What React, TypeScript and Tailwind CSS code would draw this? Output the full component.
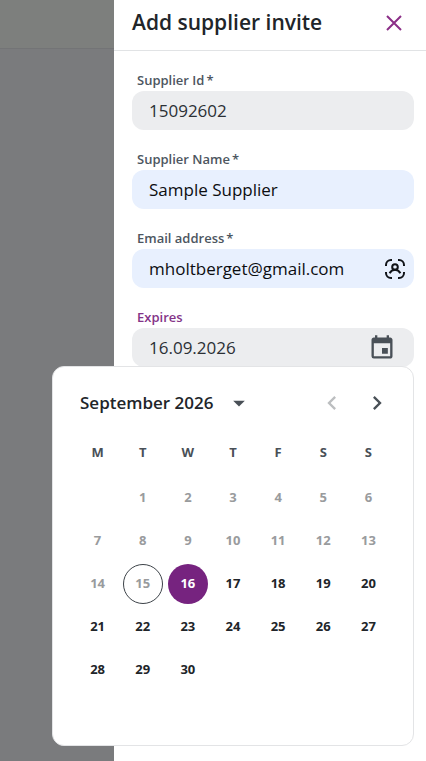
import { useState } from "react";
import { MdArrowDropDown, MdChevronLeft, MdChevronRight, MdEvent } from "react-icons/md";

const weekdays = ["M", "T", "W", "T", "F", "S", "S"];

const weeks: (number | null)[][] = [
  [null, 1, 2, 3, 4, 5, 6],
  [7, 8, 9, 10, 11, 12, 13],
  [14, 15, 16, 17, 18, 19, 20],
  [21, 22, 23, 24, 25, 26, 27],
  [28, 29, 30, null, null, null, null],
];

const today = 15;

const inputStyle = "block h-[39px] w-full rounded-xl pl-[17px] text-[17px] outline-none";

type FieldProps = {
  id: string;
  label: string;
  value: string;
  type?: string;
  filled?: boolean;
  children?: React.ReactNode;
};

const Field = ({ id, label, value, type = "text", filled, children }: FieldProps) => {
  return (
    <div>
      <label htmlFor={id} className="block h-[22px] pl-[5px] text-[13px] leading-[22px] font-semibold text-[#4d565f]">
        {label}
        <span className="ml-0.5">*</span>
      </label>
      <div className="relative">
        <input
          id={id}
          type={type}
          defaultValue={value}
          readOnly={!filled}
          className={`${inputStyle} ${filled ? "bg-[#e8f0fe] text-[#0c0d10]" : "bg-[#ecedef] text-[#2b3035]"}`}
        />
        {children}
      </div>
    </div>
  );
};

const ContactIcon = () => (
  <svg viewBox="0 0 20 20" className="size-5" fill="none" stroke="#101318" strokeWidth="2">
    <path d="M1 7V6a5 5 0 0 1 5-5h1M13 1h1a5 5 0 0 1 5 5v1M19 13v1a5 5 0 0 1-5 5h-1M7 19H6a5 5 0 0 1-5-5v-1" />
    <circle cx="10" cy="8" r="2.8" />
    <path d="M4.6 14.2c1.2-2.1 3-3.4 5.4-3.4s4.2 1.3 5.4 3.4" />
  </svg>
);

const Calendar = ({ selected, onSelect }: { selected: number; onSelect: (day: number) => void }) => {
  const dayStyle = (day: number) => {
    if (day === selected) return "bg-[#76237f] text-white";
    if (day === today) return "border border-[#3c4248] text-[#999b9d]";
    if (day < today) return "text-[#999b9d]";
    return "text-[#212529]";
  };

  return (
    <div className="absolute top-[38px] right-0 h-[380px] w-[362px] rounded-xl border border-[#e3e4e6] bg-white px-[22px] pt-2.5">
      <div className="mb-0.5 flex h-[51px] items-center justify-between">
        <button type="button" className="flex items-center gap-3 pl-[5px] text-[17px] font-semibold text-[#212529]">
          September 2026
          <MdArrowDropDown className="size-7 text-[#495057]" />
        </button>
        <div className="flex gap-[17px]">
          <button type="button" aria-label="Previous month" disabled className="text-[#bcbec0]">
            <MdChevronLeft className="size-7" />
          </button>
          <button type="button" aria-label="Next month" className="text-[#495057]">
            <MdChevronRight className="size-7" />
          </button>
        </div>
      </div>
      <table className="w-full table-fixed text-center text-[13px] font-bold">
        <thead>
          <tr className="h-[46px] text-[#495057]">
            {weekdays.map((day, i) => (
              <th key={i} className="p-0">{day}</th>
            ))}
          </tr>
        </thead>
        <tbody>
          {weeks.map((week, i) => (
            <tr key={i} className="h-[43px]">
              {week.map((day, j) => (
                <td key={j} className="p-0">
                  {day && (
                    <button
                      type="button"
                      onClick={() => onSelect(day)}
                      disabled={day < today}
                      className={`mx-auto flex size-10 items-center justify-center rounded-full ${dayStyle(day)}`}
                    >
                      {day}
                    </button>
                  )}
                </td>
              ))}
            </tr>
          ))}
        </tbody>
      </table>
    </div>
  );
};

const App = () => {
  const [day, setDay] = useState(16);

  return (
    <div className="flex min-h-screen bg-white font-['Open_Sans',sans-serif]">
      <div className="w-[114px] shrink-0 bg-[#7a7b7d]">
        <div className="h-[49px] border-b border-[#737476] bg-[#7d7f7d]" />
      </div>
      <main className="min-w-0 flex-1">
        <header className="flex h-[51px] items-center justify-between border-b border-[#e1e3e5] pr-6 pb-1 pl-[18px]">
          <h1 className="text-[21px] font-semibold text-[#212529]">Add supplier invite</h1>
          <button type="button" aria-label="Close">
            <svg viewBox="0 0 16 16" className="size-4" stroke="#8b2f87" strokeWidth="2">
              <path d="M1 1l14 14M15 1L1 15" />
            </svg>
          </button>
        </header>
        <form className="flex flex-col gap-[18px] pt-[18px] pr-3 pl-[18px]">
          <Field id="supplier-id" label="Supplier Id" value="15092602" />
          <Field id="supplier-name" label="Supplier Name" value="Sample Supplier" filled />
          <Field id="email" label="Email address" value="mholtberget@gmail.com" type="email" filled>
            <span className="absolute inset-y-0 right-[9px] flex items-center">
              <ContactIcon />
            </span>
          </Field>
          <div>
            <label htmlFor="expires" className="block h-[22px] pl-[5px] text-[13px] leading-[22px] font-semibold text-[#843488]">
              Expires
            </label>
            <div className="relative">
              <input
                id="expires"
                type="text"
                readOnly
                value={`${day}.09.2026`}
                className={`${inputStyle} bg-[#ecedef] text-[#2b3035]`}
              />
              <button type="button" aria-label="Open calendar" className="absolute inset-y-0 right-[18px] text-[#495057]">
                <MdEvent className="size-7" />
              </button>
              <Calendar selected={day} onSelect={setDay} />
            </div>
          </div>
        </form>
      </main>
    </div>
  );
};

export default App;
